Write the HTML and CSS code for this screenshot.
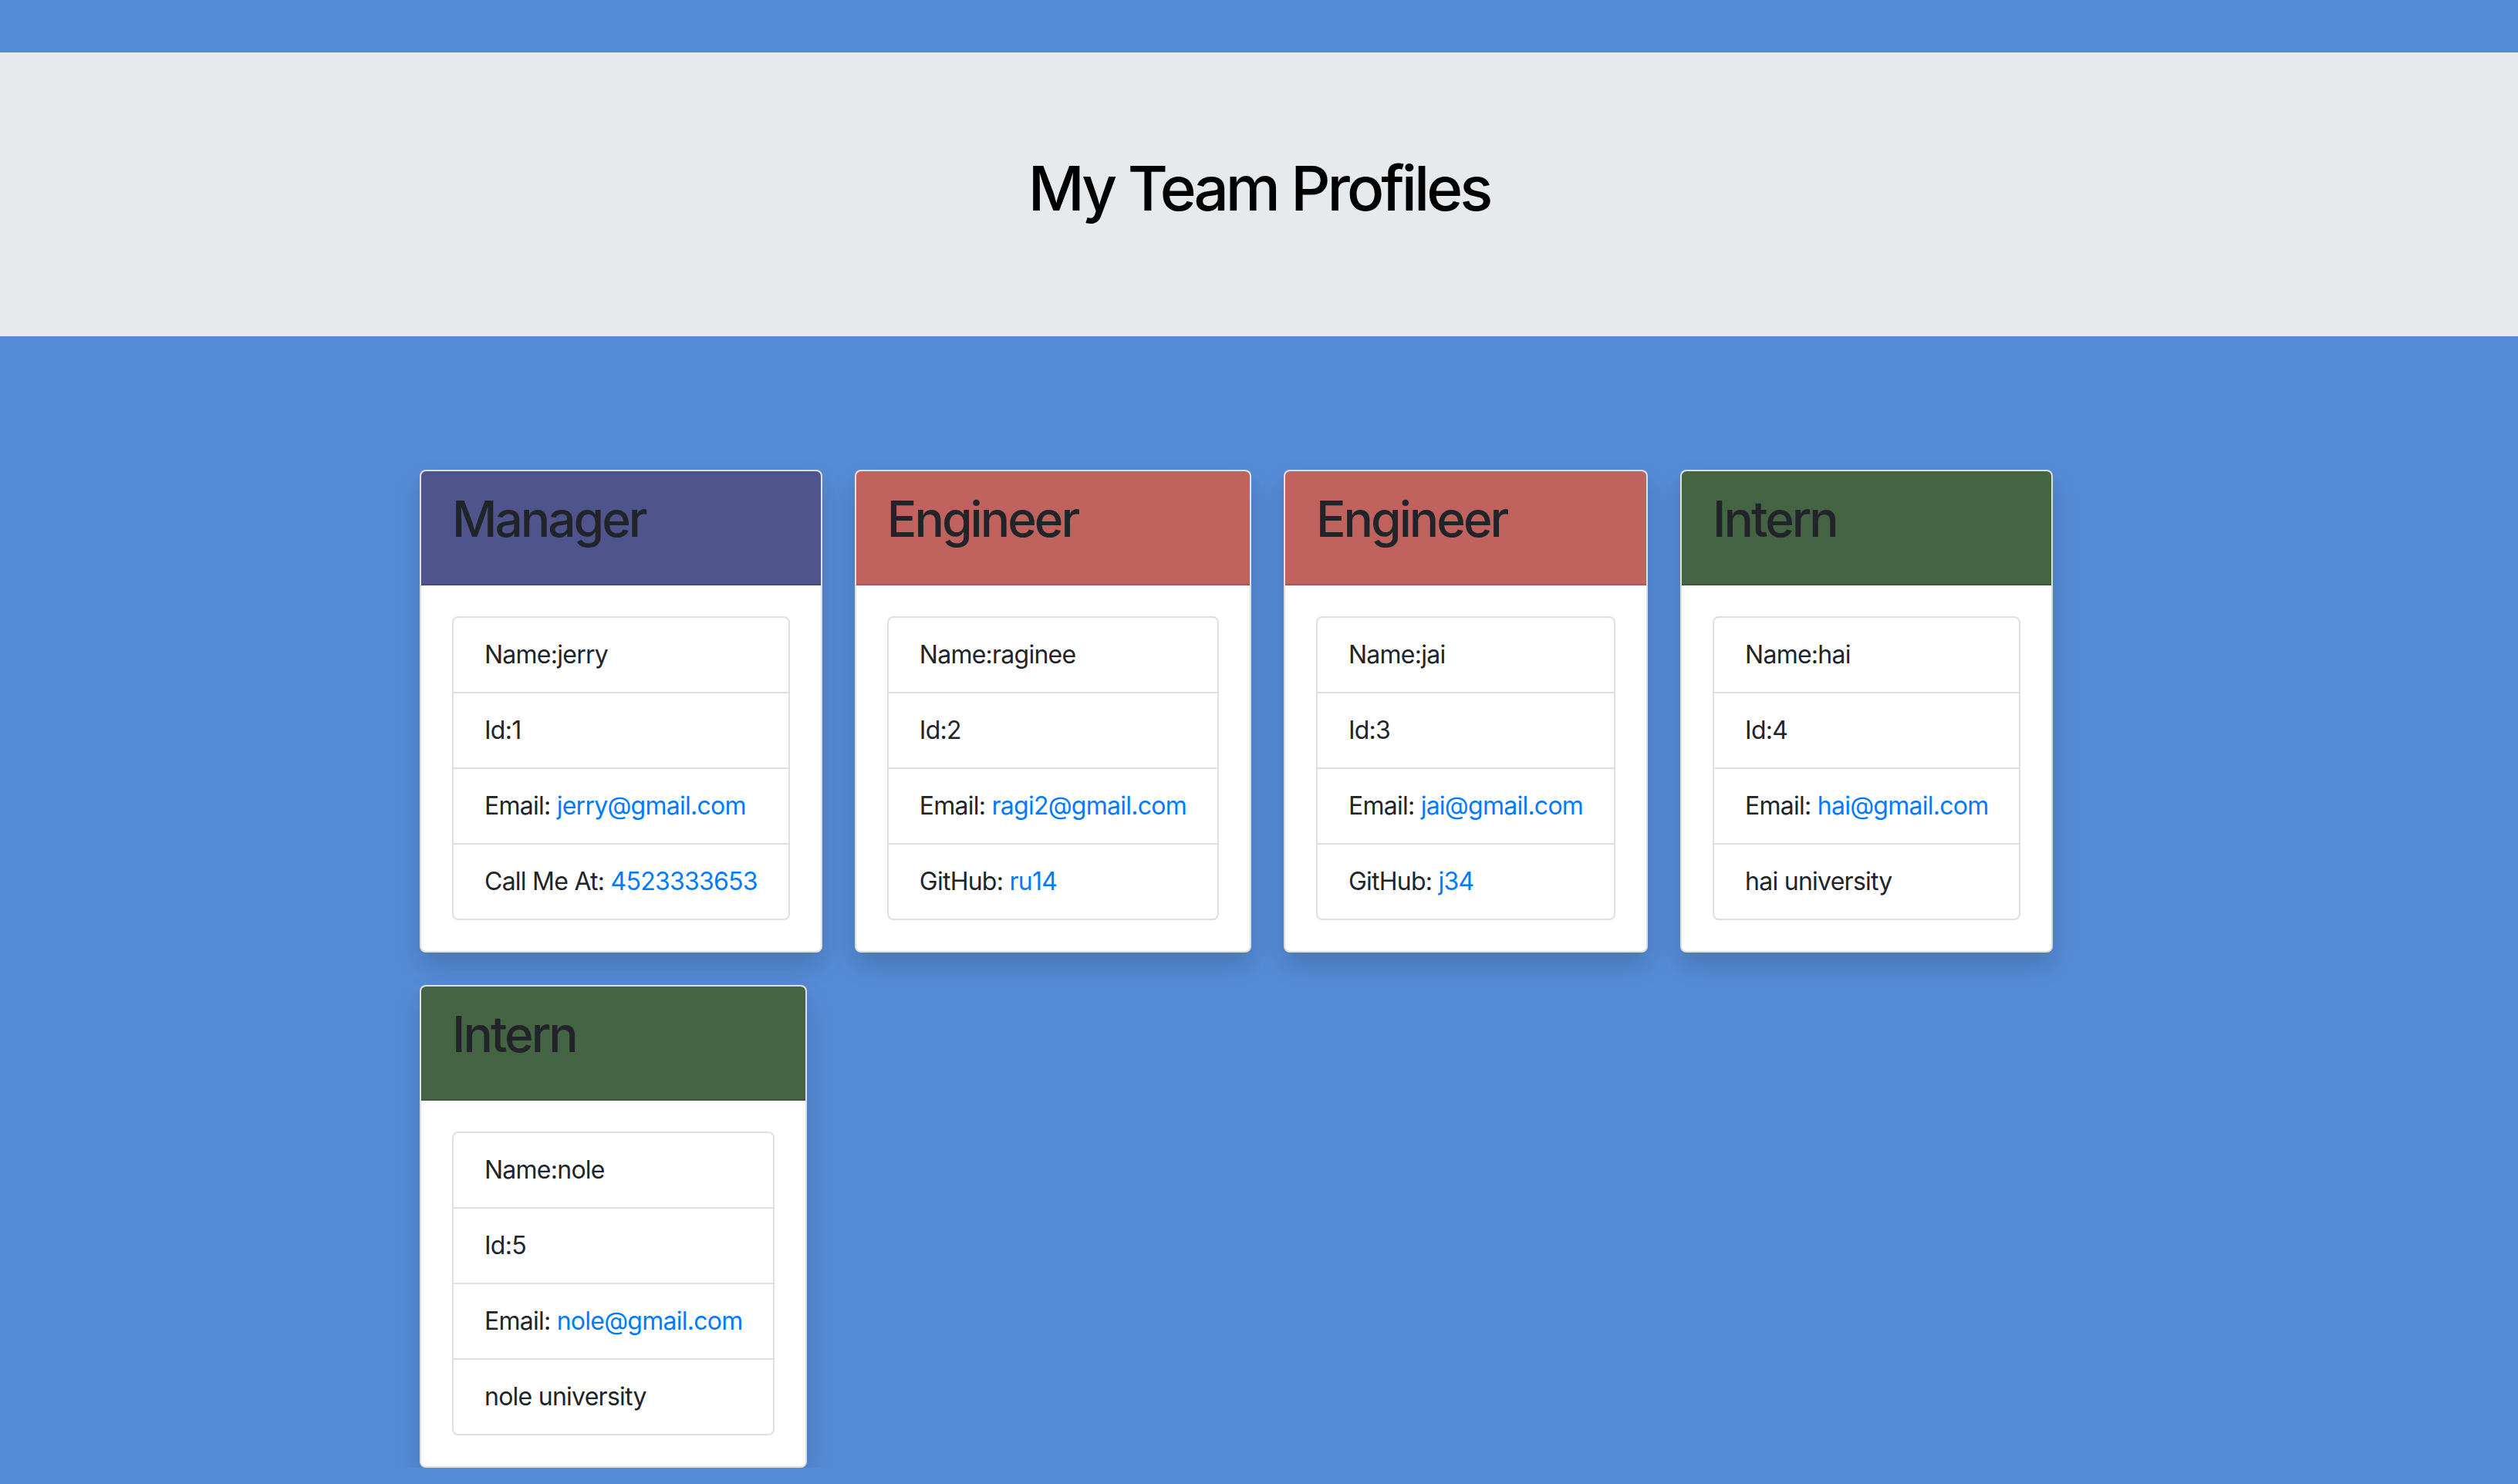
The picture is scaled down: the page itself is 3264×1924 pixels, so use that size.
FILE: index.html
```html
<!DOCTYPE html>
<html lang="en">
<head>
  <meta charset="utf-8">
  <title>My Team</title>
  <link rel="stylesheet" href="styles.css">
</head>
<body>
  <div class="jumbotron">
    <h1>My Team Profiles</h1>
  </div>

  <div class="team">
    <div class="card">
      <div class="card-header manager"><h2>Manager</h2></div>
      <div class="card-body">
        <ul class="list-group">
          <li>Name:jerry</li>
          <li>Id:1</li>
          <li>Email: <a href="mailto:jerry@gmail.com">jerry@gmail.com</a></li>
          <li>Call Me At: <a href="tel:4523333653">4523333653</a></li>
        </ul>
      </div>
    </div>

    <div class="card">
      <div class="card-header engineer"><h2>Engineer</h2></div>
      <div class="card-body">
        <ul class="list-group">
          <li>Name:raginee</li>
          <li>Id:2</li>
          <li>Email: <a href="mailto:ragi2@gmail.com">ragi2@gmail.com</a></li>
          <li>GitHub: <a href="#">ru14</a></li>
        </ul>
      </div>
    </div>

    <div class="card">
      <div class="card-header engineer"><h2>Engineer</h2></div>
      <div class="card-body">
        <ul class="list-group">
          <li>Name:jai</li>
          <li>Id:3</li>
          <li>Email: <a href="mailto:jai@gmail.com">jai@gmail.com</a></li>
          <li>GitHub: <a href="#">j34</a></li>
        </ul>
      </div>
    </div>

    <div class="card">
      <div class="card-header intern"><h2>Intern</h2></div>
      <div class="card-body">
        <ul class="list-group">
          <li>Name:hai</li>
          <li>Id:4</li>
          <li>Email: <a href="mailto:hai@gmail.com">hai@gmail.com</a></li>
          <li>hai university</li>
        </ul>
      </div>
    </div>

    <div class="card">
      <div class="card-header intern"><h2>Intern</h2></div>
      <div class="card-body">
        <ul class="list-group">
          <li>Name:nole</li>
          <li>Id:5</li>
          <li>Email: <a href="mailto:nole@gmail.com">nole@gmail.com</a></li>
          <li>nole university</li>
        </ul>
      </div>
    </div>
  </div>
</body>
</html>
```

FILE: styles.css
```css
body {margin: 0; background: #558bd6; color: #212529; font-family: Inter, "Liberation Sans", sans-serif; font-size: 32px; line-height: 48px; letter-spacing: -0.75px}
a {color: #007bff; text-decoration: none}
ul {margin: 0; padding: 0; list-style: none}

.jumbotron {margin-top: 68px; padding: 128px 64px; background: #e6eaed; text-align: center}
.jumbotron h1 {margin: 0 0 16px; font-size: 80px; line-height: 96px; font-weight: 500; letter-spacing: -4px; color: #000}

.team {box-sizing: border-box; width: 2220px; margin: 0 auto; padding: 173px 0 0 22px; display: flex; flex-wrap: wrap; align-items: flex-start; gap: 42px}

.card {background: #fff; border: 2px solid rgba(0,0,0,.125); border-radius: 8px; box-shadow: 0 16px 32px rgba(0,0,0,.15)}
.card-header {padding: 24px 40px; border-bottom: 2px solid rgba(0,0,0,.125); border-radius: 6px 6px 0 0}
.card-header h2 {margin: 0 0 22px; font-size: 64px; line-height: 76px; font-weight: 500; letter-spacing: -3px; color: #212529}
.manager {background: #4f558c}
.engineer {background: #c0635e}
.intern {background: #456443}

.card-body {padding: 40px}
.list-group {border: 2px solid rgba(0,0,0,.125); border-radius: 8px}
.list-group li {padding: 24px 40px; white-space: nowrap}
.list-group li + li {border-top: 2px solid rgba(0,0,0,.125)}
```
